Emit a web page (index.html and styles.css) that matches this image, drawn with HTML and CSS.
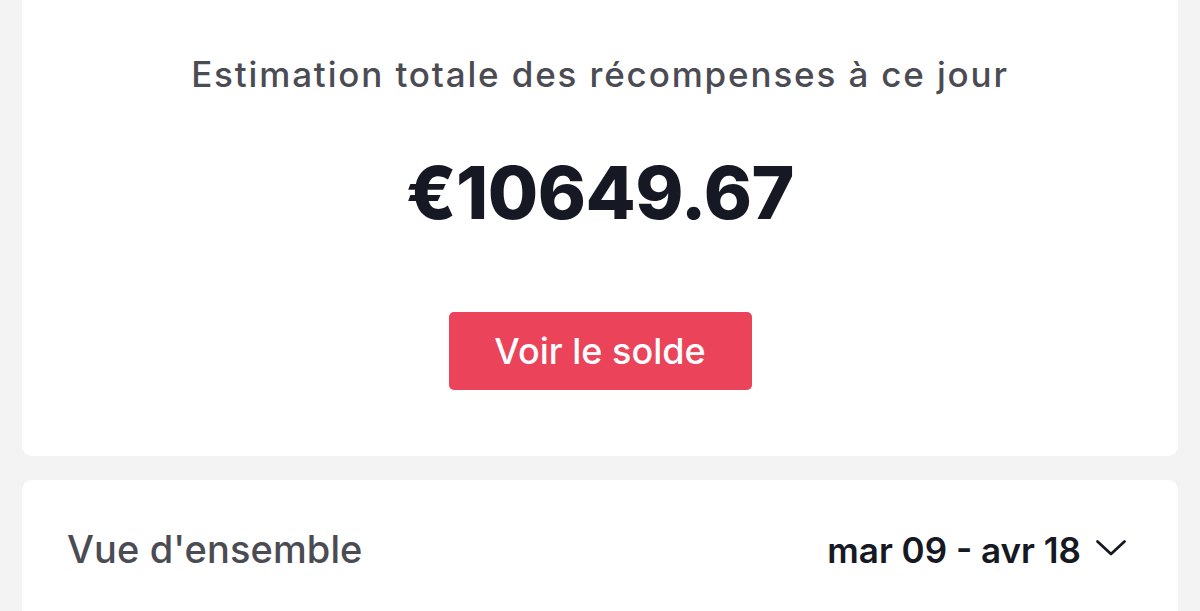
FILE: index.html
```html
<!DOCTYPE html>
<html lang="fr">
<head>
<meta charset="utf-8">
<link rel="stylesheet" href="styles.css">
</head>
<body>
<div class="page">
  <section class="card summary">
    <h2 class="label">Estimation totale des récompenses à ce jour</h2>
    <div class="amount">€10649.67</div>
    <button class="btn">Voir le solde</button>
  </section>
  <section class="card overview">
    <div class="row">
      <span class="ov-title">Vue d'ensemble</span>
      <span class="range">mar 09 - avr 18
        <svg class="chev" width="32" height="18" viewBox="0 0 32 18"><path d="M2.5 2.5 L16 15 L29.5 2.5" fill="none" stroke="#161823" stroke-width="2.8" stroke-linecap="round" stroke-linejoin="round"/></svg>
      </span>
    </div>
  </section>
</div>
</body>
</html>
```
FILE: styles.css
```css
* { box-sizing: border-box; }
html, body { margin: 0; padding: 0; }
body {
  background: #f3f3f3;
  font-family: Inter, "Noto Sans", sans-serif;
  width: 1200px;
  height: 611px;
  overflow: hidden;
}
.page {
  padding: 0 22px;
  display: flex;
  flex-direction: column;
  gap: 24px;
}
.card {
  background: #fff;
  border-radius: 10px;
}
.summary {
  height: 456px;
  border-top-left-radius: 0;
  border-top-right-radius: 0;
  display: flex;
  flex-direction: column;
  align-items: center;
  padding-top: 57px;
}
.label {
  margin: 0;
  font-size: 35px;
  font-weight: 500;
  color: #4b4b53;
  line-height: 35px;
  letter-spacing: 1.85px;
}
.amount {
  margin-top: 64px;
  font-size: 73px;
  font-weight: 800;
  color: #161823;
  line-height: 73px;
  letter-spacing: -0.5px;
}
.btn {
  margin-top: 83px;
  width: 303px;
  height: 78px;
  border: none;
  border-radius: 5px;
  background: #ea435a;
  color: #fff;
  font-family: inherit;
  font-size: 36px;
  font-weight: 500;
  display: flex;
  align-items: center;
  justify-content: center;
  padding: 0;
}
.overview {
  height: 131px;
  border-bottom-left-radius: 0;
  border-bottom-right-radius: 0;
  padding: 50px 51px 0 45px;
}
.row {
  display: flex;
  justify-content: space-between;
  align-items: baseline;
}
.ov-title {
  font-size: 38px;
  line-height: 38px;
  font-weight: 500;
  color: #4b4b53;
  letter-spacing: 0.1px;
}
.range {
  display: flex;
  align-items: center;
  gap: 14px;
  font-size: 35px;
  line-height: 35px;
  font-weight: 600;
  color: #161823;
}
.chev {
  margin-bottom: 6px;
}
```
